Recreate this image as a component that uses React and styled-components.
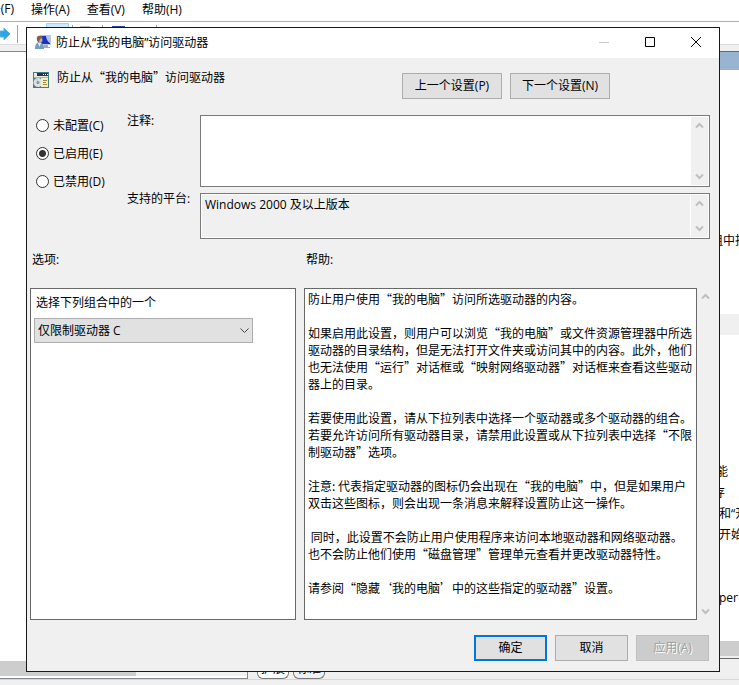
import React from "react";
import styled, { createGlobalStyle } from "styled-components";

const Global = createGlobalStyle`
  *, *::before, *::after { box-sizing: border-box; }
  body {
    margin: 0;
    background: #f0f0f0;
    color: #000;
    font: 12px/17px "Open Sans", "Noto Sans CJK SC", sans-serif;
  }
  button, select, textarea, input { font: inherit; color: inherit; margin: 0; }
`;

const CJK = `"Noto Sans CJK SC", "Noto Sans", sans-serif`;

const Desktop = styled.div`
  display: grid;
  grid-template: minmax(100vh, auto) / minmax(0, 1fr);
  overflow: hidden;
  & > * { grid-area: 1 / 1; }
`;

/* console window behind the dialog */
const Console = styled.div`
  display: flex;
  flex-direction: column;
  min-width: 0;
`;
const MenuBar = styled.nav`
  display: flex;
  gap: 17px;
  height: 22px;
  padding-bottom: 3px;
  background: #fff;
  border-bottom: 1px solid #acafb8;
  overflow: hidden;
`;
const MenuItem = styled.button`
  flex: none;
  padding: 0;
  border: 0;
  background: none;
  line-height: 17px;
  white-space: nowrap;
  &:first-child { width: 14px; display: flex; justify-content: flex-end; }
`;
const ToolBar = styled.div`
  display: flex;
  height: 23px;
  background: #fff;
  border-bottom: 1px solid #dcdcdc;
`;
const Workspace = styled.div`
  flex: 1;
  display: flex;
  padding-top: 6px;
`;
const TreePane = styled.div`
  width: 248px;
  display: flex;
  flex-direction: column;
  justify-content: flex-end;
  margin-bottom: 6px;
  background: #fff;
  border: solid #828790;
  border-width: 1px 1px 1px 0;
`;
const Track = styled.div`
  height: 17px;
  border-bottom: 2px solid #fff;
  background: #f0f0f0;
`;
const Thumb = styled.div`
  width: 136px;
  height: 15px;
  background: #cdcdcd;
`;
const Middle = styled.div`
  flex: 1;
  display: flex;
  align-items: flex-end;
  gap: 4px;
  padding: 0 0 6px 9px;
`;
const Tab = styled.button`
  width: 32px;
  height: 20px;
  padding: 0;
  border: 1px solid #777;
  border-top: 0;
  border-radius: 0 0 6px 6px;
  background: ${(p) => (p.$active ? "#fff" : "#f0f0f0")};
  line-height: 17px;
`;
const DetailPane = styled.div`
  width: 28px;
  display: flex;
  flex-direction: column;
  margin-bottom: 26px;
  overflow: hidden;
  background: #fff;
  border-top: 1px solid #696969;
  border-bottom: 1px solid #696969;
`;
const DetailHead = styled.div`
  height: 18px;
  margin-bottom: 160px;
  background: #99b4d1;
`;
const DetailRow = styled.div`
  flex: none;
  height: 21px;
  padding-left: ${(p) => p.$indent || 0}px;
  margin-bottom: ${(p) => p.$after || 0}px;
  background: ${(p) => (p.$shade ? "#f0f0f0" : "none")};
  line-height: 21px;
  white-space: nowrap;
`;
const DetailScroll = styled.div`
  height: 17px;
  margin-top: auto;
  background: #cdcdcd;
  border-bottom: 2px solid #f0f0f0;
`;
const StatusBar = styled.div`
  height: 6px;
  border-top: 1px solid #d7d7d7;
  margin-top: -6px;
`;

/* dialog */
const Dialog = styled.section`
  z-index: 1;
  display: flex;
  flex-direction: column;
  min-width: 0;
  margin: 27px 19px 13px 26px;
  border: 1px solid #181818;
  background: #f0f0f0;
`;
const TitleBar = styled.header`
  display: flex;
  align-items: center;
  height: 30px;
  padding: 0 0 2px 8px;
  background: #fff;
`;
const Title = styled.h1`
  flex: 1;
  margin: 0;
  padding-left: 5px;
  font-size: 12px;
  font-weight: 400;
`;
const Caption = styled.button`
  display: grid;
  place-items: center;
  width: 46px;
  height: 28px;
  padding: 0;
  border: 0;
  background: none;
`;
const HeadRow = styled.div`
  display: grid;
  grid-template-columns: 369px auto 1fr;
  align-items: start;
  padding: 10px 5px 0 6px;
`;
const Policy = styled.div`
  display: flex;
  align-items: flex-start;
  gap: 8px;
  font-family: ${CJK};
  svg { margin-top: 4px; }
`;
const ButtonPair = styled.div`
  display: flex;
  gap: 8px;
  padding-top: 5px;
`;
const Button = styled.button`
  width: ${(p) => (p.$wide ? 100 : 73)}px;
  height: 26px;
  padding: 0 0 2px;
  border: ${(p) => (p.$primary ? "2px solid #0078d7" : "1px solid #adadad")};
  background: #e1e1e1;
  line-height: 17px;
  &:disabled {
    border-color: #bfbfbf;
    background: #ccc;
    color: #a0a0a0;
    text-shadow: 1px 1px 0 #fff;
  }
`;
const Settings = styled.div`
  display: grid;
  grid-template-columns: 91px 73px minmax(0, 1fr);
  grid-template-rows: 72px 46px;
  row-gap: 6px;
  padding: 16px 9px 0;
`;
const RadioGroup = styled.fieldset`
  grid-row: 1 / 3;
  display: flex;
  flex-direction: column;
  gap: 11px;
  margin: 0;
  padding: 2px 0 0;
  border: 0;
`;
const Choice = styled.label`
  display: flex;
  align-items: center;
  gap: 4px;
  white-space: nowrap;
`;
const Radio = styled.input`
  appearance: none;
  flex: none;
  width: 13px;
  height: 13px;
  border: 1px solid #333;
  border-radius: 50%;
  background: #fff;
  &:checked { background: radial-gradient(circle, #333 3px, #fff 4px); }
`;
const FieldLabel = styled.label`
  margin-top: -3px;
  white-space: nowrap;
`;
const Field = styled.div`
  display: flex;
  padding: 1px;
  border: 1px solid #7a7a7a;
  background: ${(p) => (p.$readonly ? "#f0f0f0" : "#fff")};
  box-shadow: inset 0 0 0 1px #fff;
`;
const Area = styled.textarea`
  flex: 1;
  min-width: 0;
  padding: 1px 3px;
  border: 0;
  outline: 0;
  background: none;
  resize: none;
  overflow: hidden;
`;
const Scroll = styled.div`
  display: flex;
  flex-direction: column;
  justify-content: space-between;
  width: 17px;
  background: #f0f0f0;
  box-shadow: ${(p) => (p.$edge ? "-1px 0 0 #fff" : "none")};
`;
const ScrollButton = styled.button`
  display: grid;
  place-items: center;
  width: 100%;
  height: 17px;
  padding: 0;
  border: 0;
  background: none;
  color: #bfbfbf;
`;
const Columns = styled.div`
  flex: 1;
  display: grid;
  grid-template-columns: minmax(0, 266fr) minmax(0, 401fr) 17px;
  grid-template-rows: auto 1fr;
  padding: 12px 5px 0 3px;
`;
const Heading = styled.h2`
  margin: 0 0 20px;
  padding-left: 2px;
  font-size: 12px;
  font-weight: 400;
  line-height: 17px;
  &:nth-child(2) { grid-column: 2 / 4; padding-left: 10px; }
`;
const Panel = styled.div`
  border: 1px solid #696969;
  background: #fff;
`;
const Options = styled(Panel)`
  padding: 5px 3px;
  label { display: block; padding-left: 2px; }
`;
const Combo = styled.div`
  display: grid;
  align-items: center;
  width: 219px;
  max-width: 100%;
  margin-top: 7px;
  & > * { grid-area: 1 / 1; }
  svg { justify-self: end; margin-right: 4px; pointer-events: none; }
`;
const Select = styled.select`
  appearance: none;
  width: 100%;
  height: 25px;
  padding: 0 20px 0 3px;
  border: 1px solid #adadad;
  border-radius: 0;
  background: #e1e1e1;
`;
const Help = styled(Panel)`
  margin-left: 8px;
  padding: 1px 3px;
  font-family: ${CJK};
  overflow: hidden;
  text-spacing-trim: space-all;
  p { margin: 0 0 17px; white-space: pre; }
`;
const Footer = styled.footer`
  display: flex;
  justify-content: flex-end;
  gap: 8px;
  padding: 15px 10px 10px;
`;

const Chevron = ({ down }) => (
  <svg width="9" height="7" viewBox="0 0 9 7" fill="none" stroke="currentColor" strokeWidth="2">
    <path d={down ? "M1 1.500l3.500 3.500L8 1.500" : "M1 5.500l3.500-3.500L8 5.500"} />
  </svg>
);

const ScrollBar = ({ edge }) => (
  <Scroll $edge={edge}>
    <ScrollButton aria-label="向上滚动"><Chevron /></ScrollButton>
    <ScrollButton aria-label="向下滚动"><Chevron down /></ScrollButton>
  </Scroll>
);

const UserIcon = () => (
  <svg width="16" height="16" viewBox="0 0 16 16">
    <path d="M5 1h11v10H5z" fill="#c3c8ce" />
    <path d="M6 2h9v8H6z" fill="#1a2fc4" />
    <path d="M11 2h4v7c-2-1-4-4-4-7z" fill="#a9c8f5" />
    <path d="M9 11h4v2h2v1H8z" fill="#a4a9ae" />
    <path d="M0 15c0-5 2-7 4.500-7S9 10 9 15z" fill="#6f9dc6" />
    <path d="M3 9h3l-1.500 4z" fill="#eef3f8" />
    <circle cx="5" cy="6" r="2.500" fill="#d8aa80" />
    <path d="M2 6C1 2 4 1 6 2c1 0 2 1 2 2-3 0-3 1-4 4-1 0-2-1-2-2z" fill="#7b6248" />
  </svg>
);

const PolicyIcon = () => (
  <svg width="16" height="16" viewBox="0 0 16 16">
    <path d="M0 0h16v16H0z" fill="#3f7f7c" />
    <path d="M1 1h14v5H1z" fill="#ece8d8" />
    <path d="M4 1h11v3H4z" fill="#25335f" />
    <path d="M10 2h1v1h-1zM12 2h1v1h-1zM14 2h1v1h-1z" fill="#fff" />
    <path d="M1 5h14v1H1z" fill="#c9b56c" />
    <circle cx="5" cy="10.500" r="4.500" fill="#dfe1e3" />
    <path d="M5 10.500L2 7.500a4 4 0 0 1 3-1z" fill="#b6d8cf" />
    <circle cx="5" cy="10.500" r="1.500" fill="#8a9297" />
    <path d="M8 6h7v9H8z" fill="#f6ecc0" />
    <path d="M10 8.500h4M10 10.500h3M10 12.500h4" stroke="#a58a3c" />
  </svg>
);

export default function App() {
  return (
    <>
      <Global />
      <Desktop>
        <Console>
          <MenuBar>
            <MenuItem>文件(F)</MenuItem>
            <MenuItem>操作(A)</MenuItem>
            <MenuItem>查看(V)</MenuItem>
            <MenuItem>帮助(H)</MenuItem>
          </MenuBar>
          <ToolBar>
            <svg width="160" height="22" viewBox="0 0 160 22">
              <path d="M0 9h4V6l6 6-6 6v-3H0z" fill="#2ba3e6" stroke="#5bb4e6" />
              <path d="M17.500 3v18M72.500 3v18M102.500 3v18M156.500 3v18" stroke="#a0a0a0" />
              <path d="M46.500 1.500h22v20h-22z" fill="#cce8ff" stroke="#99d1ff" />
              <path d="M80 4h10v12H80z" fill="#c4c4c4" />
              <path d="M112 4h13v12h-13z" fill="#2a46b4" />
            </svg>
          </ToolBar>
          <Workspace>
            <TreePane>
              <Track><Thumb /></Track>
            </TreePane>
            <Middle>
              <Tab $active>扩展</Tab>
              <Tab>标准</Tab>
            </Middle>
            <DetailPane>
              <DetailHead />
              <DetailRow $after={63}>组中指</DetailRow>
              <DetailRow $shade $after={126}>{" "}</DetailRow>
              <DetailRow $indent={5}>能</DetailRow>
              <DetailRow $indent={2}>存</DetailRow>
              <DetailRow $indent={8}>和“开</DetailRow>
              <DetailRow $indent={8} $after={42}>开始</DetailRow>
              <DetailRow $indent={8}>per</DetailRow>
              <DetailScroll />
            </DetailPane>
          </Workspace>
          <StatusBar />
        </Console>

        <Dialog role="dialog" aria-labelledby="dialog-title">
          <TitleBar>
            <UserIcon />
            <Title id="dialog-title">防止从“我的电脑”访问驱动器</Title>
            <Caption aria-label="最小化">
              <svg width="10" height="10" stroke="#ccc"><path d="M0 5.500h10" /></svg>
            </Caption>
            <Caption aria-label="最大化">
              <svg width="10" height="10" fill="none" stroke="#000"><path d="M.5.5h9v9h-9z" /></svg>
            </Caption>
            <Caption aria-label="关闭">
              <svg width="10" height="10" stroke="#000"><path d="M0 0l10 10M10 0L0 10" /></svg>
            </Caption>
          </TitleBar>

          <HeadRow>
            <Policy>
              <PolicyIcon />
              <span>防止从“我的电脑”访问驱动器</span>
            </Policy>
            <ButtonPair>
              <Button $wide>上一个设置(P)</Button>
              <Button $wide>下一个设置(N)</Button>
            </ButtonPair>
          </HeadRow>

          <Settings>
            <RadioGroup aria-label="状态">
              <Choice><Radio type="radio" name="state" />未配置(C)</Choice>
              <Choice><Radio type="radio" name="state" defaultChecked />已启用(E)</Choice>
              <Choice><Radio type="radio" name="state" />已禁用(D)</Choice>
            </RadioGroup>
            <FieldLabel htmlFor="comment">注释:</FieldLabel>
            <Field>
              <Area id="comment" />
              <ScrollBar />
            </Field>
            <FieldLabel htmlFor="platform">支持的平台:</FieldLabel>
            <Field $readonly>
              <Area id="platform" readOnly defaultValue="Windows 2000 及以上版本" />
              <ScrollBar edge />
            </Field>
          </Settings>

          <Columns>
            <Heading>选项:</Heading>
            <Heading>帮助:</Heading>
            <Options>
              <label htmlFor="combination">选择下列组合中的一个</label>
              <Combo>
                <Select id="combination">
                  <option>仅限制驱动器 C</option>
                </Select>
                <svg width="9" height="6" fill="none" stroke="#444"><path d="M.5.5l4 4 4-4" /></svg>
              </Combo>
            </Options>
            <Help>
              <p>防止用户使用“我的电脑”访问所选驱动器的内容。</p>
              <p>{"如果启用此设置，则用户可以浏览“我的电脑”或文件资源管理器中所选\n驱动器的目录结构，但是无法打开文件夹或访问其中的内容。此外，他们\n也无法使用“运行”对话框或“映射网络驱动器”对话框来查看这些驱动\n器上的目录。"}</p>
              <p>{"若要使用此设置，请从下拉列表中选择一个驱动器或多个驱动器的组合。\n若要允许访问所有驱动器目录，请禁用此设置或从下拉列表中选择“不限\n制驱动器”选项。"}</p>
              <p>{"注意: 代表指定驱动器的图标仍会出现在“我的电脑”中，但是如果用户\n双击这些图标，则会出现一条消息来解释设置防止这一操作。"}</p>
              <p>{" 同时，此设置不会防止用户使用程序来访问本地驱动器和网络驱动器。\n也不会防止他们使用“磁盘管理”管理单元查看并更改驱动器特性。"}</p>
              <p>请参阅“隐藏‘我的电脑’中的这些指定的驱动器”设置。</p>
            </Help>
            <ScrollBar />
          </Columns>

          <Footer>
            <Button $primary>确定</Button>
            <Button>取消</Button>
            <Button disabled>应用(A)</Button>
          </Footer>
        </Dialog>
      </Desktop>
    </>
  );
}
